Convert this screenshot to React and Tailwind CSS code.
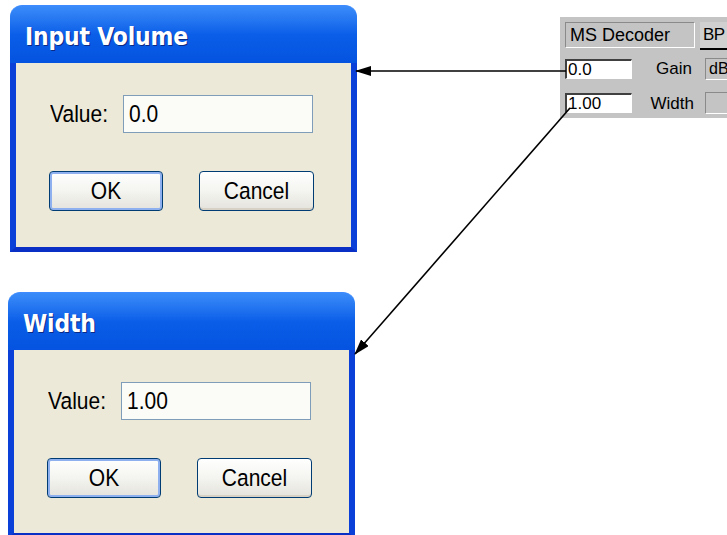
import React from 'react';

function XpButton({ label, isDefault }) {
  return (
    <button
      className={
        'flex h-[40px] items-center justify-center rounded-[4px] border border-[#003c74] bg-gradient-to-b from-[#ffffff] via-[#f4f4f0] to-[#e4e3dc] text-[21px] text-black ' +
        (isDefault ? 'shadow-[inset_0_0_0_2px_#8fb0ef]' : 'shadow-[inset_0_-2px_0_#d6d0c5]')
      }
    >
      <span className="inline-block scale-y-[1.12]">{label}</span>
    </button>
  );
}

function ValueDialog({ title, value, className }) {
  return (
    <div className={'absolute flex w-[347px] flex-col ' + className}>
      <div className="flex h-[58px] items-center rounded-t-[12px] border-t border-[#3d8bff] bg-gradient-to-b from-[#3b8cf9] via-[#0a5ee8] to-[#0553e0] px-[15px] pt-[4px]">
        <span className="inline-block origin-left scale-y-[1.15] font-['DejaVu_Sans',sans-serif] text-[22px] font-bold tracking-[-0.2px] text-white [text-shadow:1px_1px_0_#0b2a86]">
          {title}
        </span>
      </div>
      <div className="flex-1 border-x-[6px] border-b-[5px] border-x-[#0a3fd8] border-b-[#0a2fc4] bg-[#ece9d8] pt-[32px]">
        <div className="flex items-center">
          <span className="ml-[34px] inline-block w-[73px] scale-y-[1.12] text-[21px] text-black">Value:</span>
          <div className="flex h-[38px] w-[190px] items-center border border-[#7f9db9] bg-[#fbfbf8] px-[5px] text-[21px] text-black">
            <span className="inline-block scale-y-[1.12]">{value}</span>
          </div>
        </div>
        <div className="mt-[38px] grid grid-cols-[114px_115px] gap-x-[36px] pl-[33px]">
          <XpButton label="OK" isDefault />
          <XpButton label="Cancel" />
        </div>
      </div>
    </div>
  );
}

function Sunken({ children, className }) {
  return (
    <div
      className={
        'flex items-center border-t-2 border-l-2 border-b border-r border-t-[#404040] border-l-[#404040] border-b-[#ffffff] border-r-[#ffffff] ' +
        className
      }
    >
      {children}
    </div>
  );
}

function DecoderPanel() {
  return (
    <div className="absolute left-[560px] top-[17px] h-[101px] w-[167px] bg-[#c4c4c4] pt-[5px] pl-[5px] text-black">
      <div className="grid grid-cols-[130px_35px] gap-x-[5px]">
        <div className="flex h-[26px] items-center border border-t-[#8a8a8a] border-l-[#8a8a8a] border-b-white border-r-white px-[4px] text-[18px]">
          MS Decoder
        </div>
        <div className="flex h-[28px] items-center border-b-2 border-b-black bg-[#d0d0d0] px-[3px] text-[17px] tracking-[-0.5px]">
          BP
        </div>
      </div>
      <div className="mt-[6px] grid grid-cols-[67px_63px_35px] items-center gap-x-[5px] gap-y-[9px]">
        <Sunken className="h-[20px] bg-white pl-[1px] text-[17px]">0.0</Sunken>
        <span className="pr-[8px] text-right text-[17px]">Gain</span>
        <div className="flex h-[22px] items-center border border-t-[#8a8a8a] border-l-[#8a8a8a] border-b-white border-r-white px-[3px] text-[16px]">
          dB
        </div>
        <Sunken className="h-[20px] bg-white pl-[1px] text-[17px]">1.00</Sunken>
        <span className="pr-[6px] text-right text-[17px]">Width</span>
        <div className="h-[22px] border border-t-[#8a8a8a] border-l-[#8a8a8a] border-b-white border-r-white" />
      </div>
    </div>
  );
}

export default function App() {
  return (
    <div className="relative h-[535px] w-[727px] overflow-hidden bg-white font-['Liberation_Sans',Arial,sans-serif]">
      <ValueDialog title="Input Volume" value="0.0" className="left-[10px] top-[5px] h-[247px]" />
      <ValueDialog title="Width" value="1.00" className="left-[8px] top-[292px] h-[246px]" />
      <DecoderPanel />
      <svg className="pointer-events-none absolute left-0 top-0" width="727" height="535">
        <defs>
          <marker id="head" markerWidth="16" markerHeight="10" refX="15" refY="5" orient="auto" markerUnits="userSpaceOnUse">
            <path d="M0 0 L16 5 L0 10 Z" fill="#000" />
          </marker>
        </defs>
        <line x1="566" y1="71" x2="356" y2="71" stroke="#000" strokeWidth="1.6" markerEnd="url(#head)" />
        <line x1="570" y1="108" x2="355" y2="354" stroke="#000" strokeWidth="1.6" markerEnd="url(#head)" />
      </svg>
    </div>
  );
}
